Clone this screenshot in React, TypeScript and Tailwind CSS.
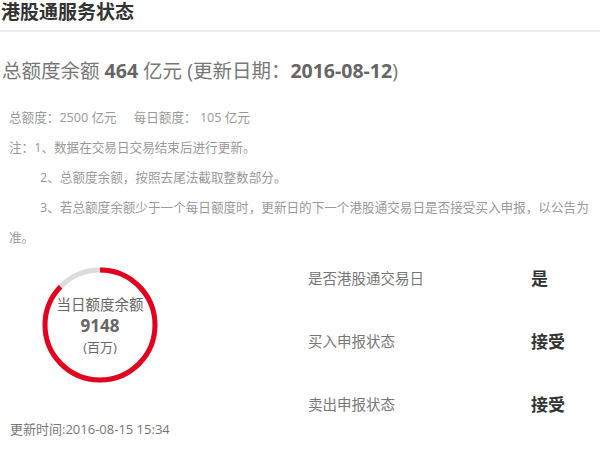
const total = 10500
const remaining = 9148

const rows = [
  { label: '是否港股通交易日', value: '是' },
  { label: '买入申报状态', value: '接受' },
  { label: '卖出申报状态', value: '接受' },
]

function QuotaRing() {
  const r = 55
  const c = 2 * Math.PI * r
  const used = c * (remaining / total)
  return (
    <div className="relative w-[120px] h-[120px]">
      <svg width="120" height="120" viewBox="0 0 120 120">
        <circle cx="60" cy="60" r={r} fill="none" stroke="#dcdcdc" strokeWidth="5" />
        <circle
          cx="60"
          cy="60"
          r={r}
          fill="none"
          stroke="#e2001f"
          strokeWidth="5"
          strokeDasharray={`${used} ${c}`}
          transform="rotate(-90 60 60)"
        />
      </svg>
      <div className="absolute inset-0 flex flex-col items-center justify-center text-[#666] pt-[2px]">
        <div className="text-[14.5px] leading-[20px]">当日额度余额</div>
        <div className="text-[17px] font-bold leading-[22px]">9148</div>
        <div className="text-[13px] leading-[20px]">(百万)</div>
      </div>
    </div>
  )
}

export default function App() {
  return (
    <div className="w-[600px] h-[451px] bg-white font-['Open_Sans','Noto_Sans_CJK_SC',sans-serif] overflow-hidden">
      <h1 className="h-[30px] leading-[25px] pl-[1px] text-[19px] font-bold text-[#333]">港股通服务状态</h1>
      <div className="border-b-2 border-[#eeeeee]" />

      <div className="mt-[24px] pl-[2px] text-[19.5px] leading-[30px] text-[#777]">
        总额度余额 <span className="font-bold text-[#666]">464</span> 亿元 (更新日期：
        <span className="font-bold text-[#666]">2016-08-12</span>)
      </div>

      <div className="mt-[17px] pl-[9px] pr-[8px] text-[12.6px] leading-[30px] text-[#999]">
        <p>
          总额度：2500 亿元<span className="ml-[17px]">每日额度： 105 亿元</span>
        </p>
        <p>注：1、数据在交易日交易结束后进行更新。</p>
        <p className="pl-[31px]">2、总额度余额，按照去尾法截取整数部分。</p>
        <p className="indent-[31px]">
          3、若总额度余额少于一个每日额度时，更新日的下一个港股通交易日是否接受买入申报，以公告为准。
        </p>
      </div>

      <div className="flex">
        <div className="w-[200px]">
          <div className="mt-[12px] pl-[40px]">
            <QuotaRing />
          </div>
          <div className="mt-[29px] pl-[10px] text-[13px] leading-[30px] text-[#777]">
            更新时间:2016-08-15 15:34
          </div>
        </div>

        <div className="flex flex-col gap-[33px] pt-[11px] pl-[108px]">
          {rows.map((row) => (
            <div key={row.label} className="flex items-center h-[30px]">
              <div className="w-[223px] text-[14.5px] text-[#777]">{row.label}</div>
              <div className="text-[17px] font-bold text-[#333]">{row.value}</div>
            </div>
          ))}
        </div>
      </div>
    </div>
  )
}
